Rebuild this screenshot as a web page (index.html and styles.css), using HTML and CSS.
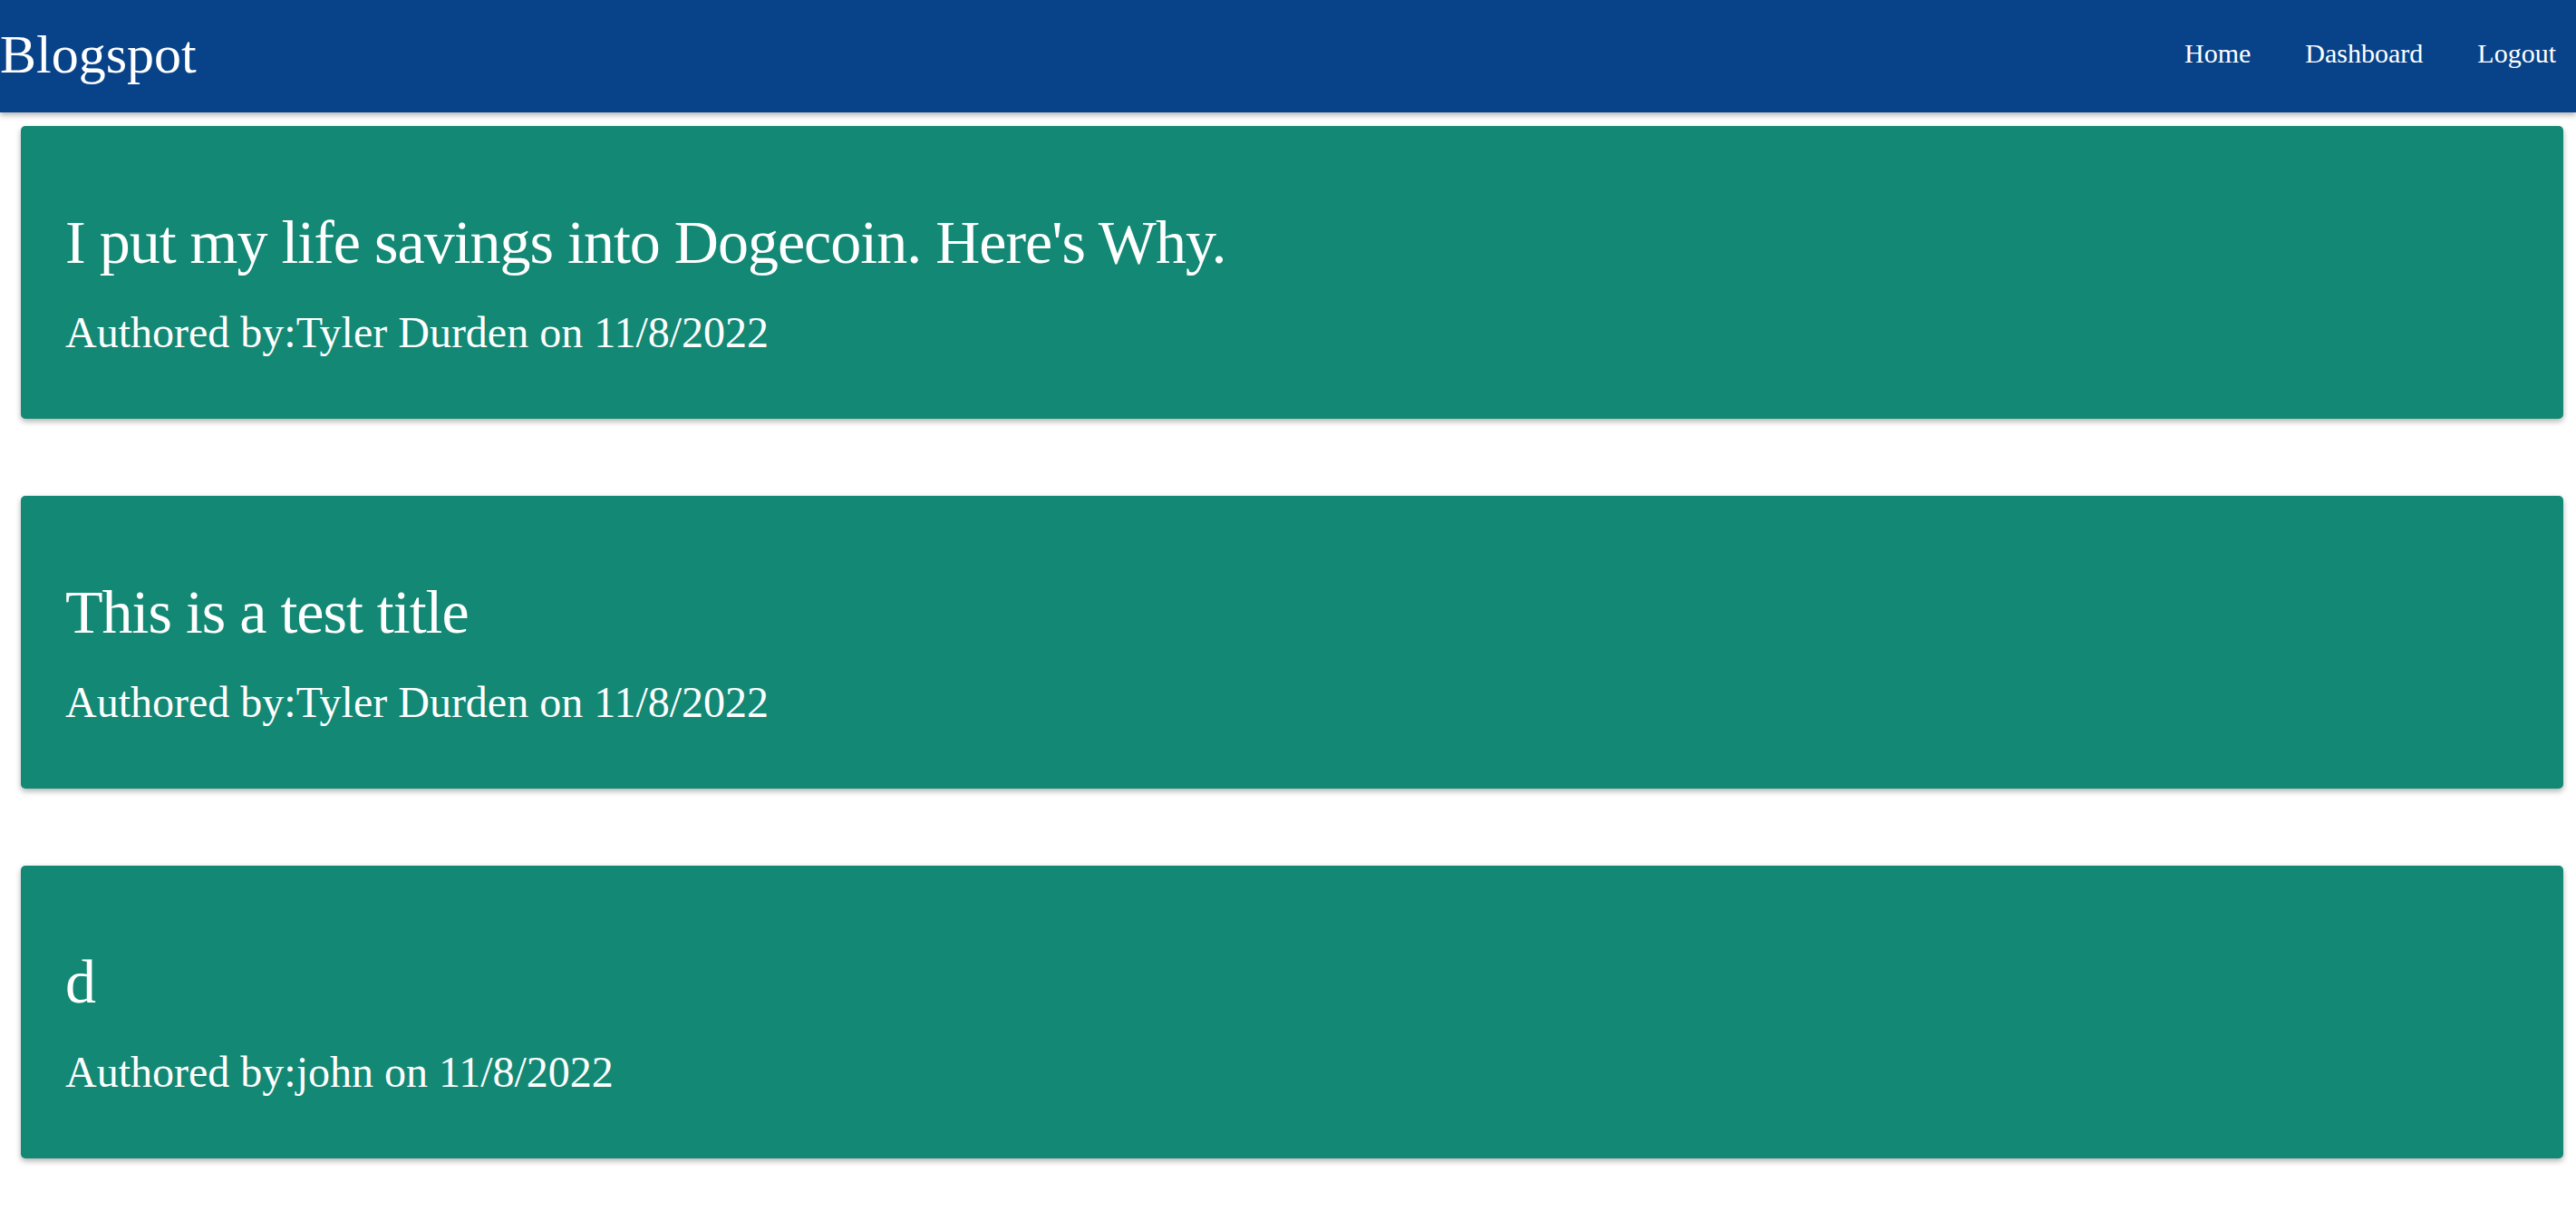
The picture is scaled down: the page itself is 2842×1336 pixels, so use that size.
FILE: index.html
```html
<!DOCTYPE html>
<html lang="en">
<head>
<meta charset="utf-8">
<title>Blogspot</title>
<link rel="stylesheet" href="styles.css">
</head>
<body>
<header class="navbar">
  <a class="brand" href="#">Blogspot</a>
  <nav class="nav-links">
    <a href="#">Home</a>
    <a href="#">Dashboard</a>
    <a href="#">Logout</a>
  </nav>
</header>
<main class="posts">
  <article class="post-card">
    <h2 class="post-title">I put my life savings into Dogecoin. Here's Why.</h2>
    <h3 class="post-meta">Authored by:Tyler Durden on 11/8/2022</h3>
  </article>
  <article class="post-card">
    <h2 class="post-title">This is a test title</h2>
    <h3 class="post-meta">Authored by:Tyler Durden on 11/8/2022</h3>
  </article>
  <article class="post-card">
    <h2 class="post-title">d</h2>
    <h3 class="post-meta">Authored by:john on 11/8/2022</h3>
  </article>
</main>
</body>
</html>
```
FILE: styles.css
```css
* { box-sizing: border-box; }
html, body {
  margin: 0;
  padding: 0;
  background: #ffffff;
  font-family: "Liberation Serif", "DejaVu Serif", serif;
  color: #ffffff;
}
a { color: #ffffff; text-decoration: none; }

.navbar {
  height: 124px;
  background: #08438a;
  display: flex;
  align-items: center;
  justify-content: space-between;
  padding: 0 22px 0 0;
  box-shadow: 0 3px 6px rgba(0, 0, 0, 0.3);
  position: relative;
  z-index: 1;
}
.brand {
  font-size: 60px;
  line-height: 1;
  padding-bottom: 4px;
}
.nav-links {
  display: flex;
  gap: 60px;
  font-size: 30px;
  padding-bottom: 6px;
}

.posts {
  display: flex;
  flex-direction: column;
  gap: 85px;
  padding: 15px 14px 40px 23px;
}
.post-card {
  background: #138874;
  border-radius: 5px;
  box-shadow: 0 3px 6px rgba(0, 0, 0, 0.3);
  padding: 85px 49px 66px;
  height: 323px;
}
.post-title {
  margin: 0 0 27px;
  font-size: 68px;
  letter-spacing: -1px;
  line-height: 86px;
  font-weight: normal;
}
.post-meta {
  margin: 0;
  font-size: 48px;
  line-height: 60px;
  font-weight: normal;
}
```
